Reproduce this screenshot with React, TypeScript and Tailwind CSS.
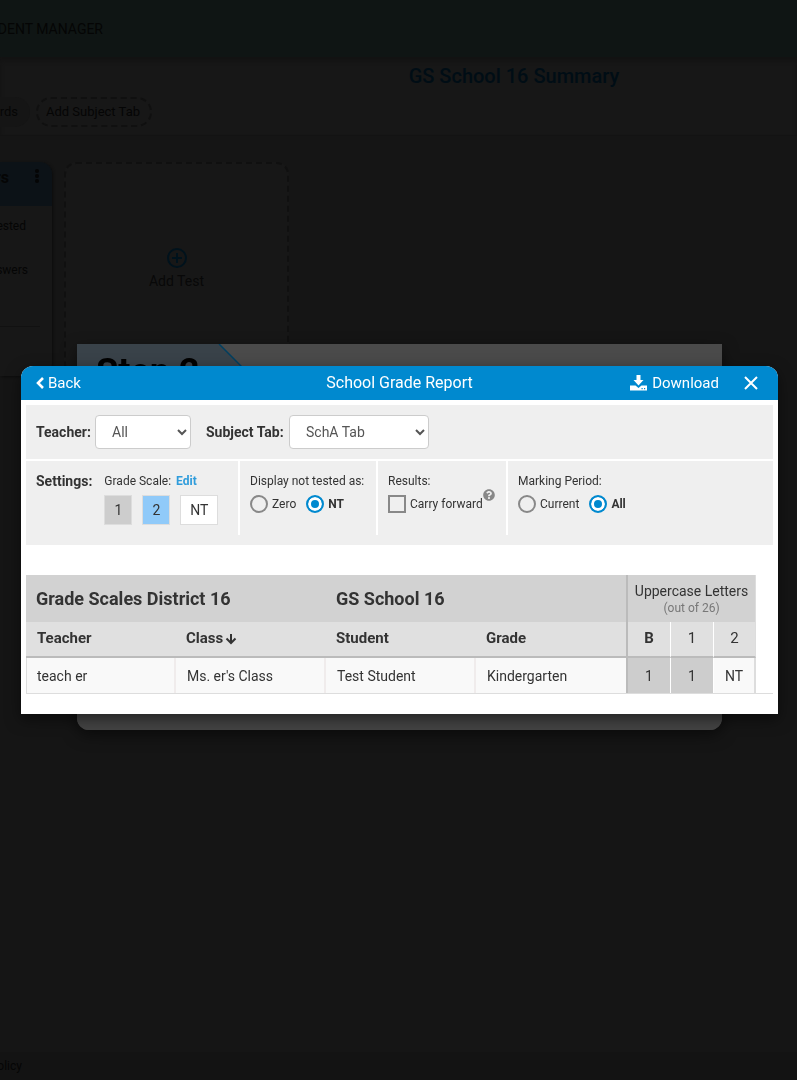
import React from "react";
import { FaQuestionCircle } from "react-icons/fa";

function Radio({ name, label, checked = false }: { name: string; label: string; checked?: boolean }) {
  return (
    <label className={checked ? "flex items-center gap-1 font-bold" : "flex items-center gap-1"}>
      <input
        type="radio"
        name={name}
        defaultChecked={checked}
        className="size-[18px] appearance-none rounded-full border-2 border-[#888] checked:border-[#0089cf] checked:bg-[#0089cf] checked:shadow-[inset_0_0_0_3px_#fff]"
      />
      {label}
    </label>
  );
}

function Backdrop() {
  return (
    <div className="flex min-h-screen flex-col overflow-hidden bg-[#151515] text-[#050505]">
      <header className="flex h-[57px] items-center bg-[#0f1514]">
        <div className="flex w-[103px] justify-end text-sm whitespace-nowrap">STUDENT MANAGER</div>
      </header>
      <section className="h-[79px] border-b border-[#131313] bg-[#171717] shadow-[inset_0_4px_4px_#131313]">
        <h1 className="pt-[5px] pl-[231px] text-center text-xl leading-7 font-medium text-[#000d15]">
          GS School 16 Summary
        </h1>
        <nav className="flex gap-1.5 pt-[7px] text-[13px] leading-[26px]">
          <div className="flex w-[30px] justify-end rounded-r-full bg-[#151515] py-0.5 pr-3 whitespace-nowrap">
            <button type="button">Words</button>
          </div>
          <button type="button" className="rounded-full border-2 border-dashed border-[#101010] pr-2.5 pl-2">
            Add Subject Tab
          </button>
        </nav>
      </section>
      <div className="flex grow items-start gap-3 pt-[26px]">
        <article className="h-[214px] w-[52px] overflow-hidden rounded-r-xl bg-[#171717] text-xs shadow-[1px_1px_3px_#0c0c0c]">
          <div className="flex h-[44px] justify-end gap-[26px] bg-[#0c1217] pr-[13px] whitespace-nowrap">
            <h2 className="pt-1 text-base font-bold">Letters</h2>
            <svg viewBox="0 0 4 14" className="mt-[7px] h-3.5 w-1 shrink-0 fill-[#050505]" aria-hidden="true">
              <circle cx="2" cy="2" r="2" />
              <circle cx="2" cy="7" r="2" />
              <circle cx="2" cy="12" r="2" />
            </svg>
          </div>
          <p className="flex justify-end pt-3 pr-[26px] leading-4 whitespace-nowrap">Not Tested</p>
          <p className="flex justify-end pt-7 pr-6 leading-4 whitespace-nowrap">Answers</p>
          <hr className="mt-12 mr-3 border-[#111]" />
        </article>
        <button
          type="button"
          className="flex h-[214px] w-[225px] flex-col items-center justify-center gap-[3px] rounded-xl border-2 border-dashed border-[#101010] bg-[#171717] text-sm text-[#080808]"
        >
          <svg viewBox="0 0 20 20" className="size-5 fill-none stroke-[#00121c] stroke-2" aria-hidden="true">
            <circle cx="10" cy="10" r="9" />
            <path d="M10 5v10M5 10h10" />
          </svg>
          Add Test
        </button>
      </div>
      <footer className="h-7 bg-[#131313] text-xs leading-7">
        <div className="flex w-[22px] justify-end whitespace-nowrap">Privacy Policy</div>
      </footer>
    </div>
  );
}

function StepDialog() {
  return (
    <div className="fixed inset-0 flex items-center pr-[75px] pb-1.5 pl-[77px]">
      <div className="w-full overflow-hidden rounded-b-xl bg-[#4a4a4a] shadow-[0_5px_15px_rgba(0,0,0,0.5)]">
        <div className="relative h-[60px]">
          <svg viewBox="0 0 200 60" className="absolute top-0 left-0 h-[60px] w-[200px]" aria-hidden="true">
            <path d="M0 0H142L200 58V60H0Z" fill="#394249" />
            <path d="M142 0L200 58" stroke="#003f60" strokeWidth="1.5" />
          </svg>
          <h2 className="relative pt-2 pl-[19px] text-4xl font-bold text-black">Step 2</h2>
        </div>
        <div className="h-[326px] bg-[#444]" />
      </div>
    </div>
  );
}

const chips = [
  { text: "1", style: "w-7 bg-[#cdcdcd]" },
  { text: "2", style: "w-7 bg-[#90caf9]" },
  { text: "NT", style: "w-[38px] bg-white" },
];

function ReportDialog() {
  return (
    <div className="fixed inset-0 flex items-center pr-[19px] pl-[21px]">
      <div
        role="dialog"
        aria-labelledby="report-title"
        className="w-full rounded-t-xl bg-white text-[#333] shadow-[0_5px_15px_rgba(0,0,0,0.5)]"
      >
        <div className="grid h-[34px] grid-cols-3 items-center rounded-t-xl bg-[#0089cf] px-[15px] text-white">
          <button type="button" className="flex items-center gap-1 text-[15px]">
            <svg viewBox="0 0 8 12" className="h-3 w-2 fill-none stroke-white stroke-[2.6]" aria-hidden="true">
              <path d="M7 1L2 6L7 11" />
            </svg>
            Back
          </button>
          <h2 id="report-title" className="text-center text-base whitespace-nowrap">School Grade Report</h2>
          <div className="flex items-center justify-end gap-[25px] pr-[5px]">
            <button type="button" className="flex items-center gap-[5px] text-[15px]">
              <svg viewBox="0 0 17 16" className="h-4 w-[17px] fill-white" aria-hidden="true">
                <path d="M6.5 0H10.500V5H13.500L8.500 10.500L3.500 5H6.500Z" />
                <path fillRule="evenodd" d="M0 10.500H5.500L8.500 13L11.500 10.500H17V15.500H0ZM11.500 13V14.200H12.700V13ZM14 13V14.200H15.200V13Z" />
              </svg>
              Download
            </button>
            <button type="button" aria-label="Close">
              <svg viewBox="0 0 14 14" className="size-3.5 fill-none stroke-white stroke-2" aria-hidden="true">
                <path d="M1 1L13 13M13 1L1 13" />
              </svg>
            </button>
          </div>
        </div>
        <div className="px-[5px] pt-[5px] pb-5">
          <div className="flex items-center bg-[#efefef] px-2.5 py-2.5 text-sm">
            <label htmlFor="teacher" className="w-[59px] font-bold">Teacher:</label>
            <select id="teacher" className="mr-[15px] h-[34px] w-24 rounded border border-[#ccc] bg-white px-3 text-[#555]">
              <option>All</option>
            </select>
            <label htmlFor="subject" className="w-[83px] font-bold">Subject Tab:</label>
            <select id="subject" className="h-[34px] w-[140px] rounded border border-[#ccc] bg-white px-3 text-[#555]">
              <option>SchA Tab</option>
            </select>
          </div>
          <div className="mt-0.5 flex h-[84px] bg-[#efefef] pb-2.5 text-xs leading-5">
            <div className="flex w-[214px] gap-3 border-r-2 border-white pt-2.5 pl-2.5">
              <h3 className="text-sm leading-5 font-bold">Settings:</h3>
              <div>
                <div className="flex gap-[5px]">
                  Grade Scale:
                  <a href="#edit" className="font-bold text-[#2f9cdb]">Edit</a>
                </div>
                <div className="mt-1 flex gap-2.5 text-sm">
                  {chips.map((c) => (
                    <span key={c.text} className={`${c.style} flex h-[30px] items-center justify-center border border-[#ddd]`}>
                      {c.text}
                    </span>
                  ))}
                </div>
              </div>
            </div>
            <div role="radiogroup" aria-labelledby="untested-label" className="w-[138px] border-r-2 border-white pt-2.5 pl-2.5 whitespace-nowrap">
              <div id="untested-label">Display not tested as:</div>
              <div className="flex gap-2.5 pt-[3px]">
                <Radio name="untested" label="Zero" />
                <Radio name="untested" label="NT" checked />
              </div>
            </div>
            <div className="w-[130px] border-r-2 border-white pt-2.5 pl-2.5 whitespace-nowrap">
              <div>Results:</div>
              <div className="flex items-start pt-[3px]">
                <label className="flex items-center gap-1">
                  <input type="checkbox" className="size-[18px] appearance-none border-2 border-[#888] checked:bg-[#0089cf]" />
                  Carry forward
                </label>
                <FaQuestionCircle className="-mt-[5px] size-3 shrink-0 text-[#888]" />
              </div>
            </div>
            <div role="radiogroup" aria-labelledby="period-label" className="pt-2.5 pl-2.5 whitespace-nowrap">
              <div id="period-label">Marking Period:</div>
              <div className="flex gap-2.5 pt-[3px]">
                <Radio name="period" label="Current" />
                <Radio name="period" label="All" checked />
              </div>
            </div>
          </div>
          <div className="mt-[30px] border-b border-[#ddd]">
            <table className="w-[730px] table-fixed border-separate border-spacing-0 text-sm">
              <colgroup>
                <col className="w-[150px]" />
                <col className="w-[150px]" />
                <col className="w-[150px]" />
                <col className="w-[150px]" />
                <col className="w-[45px]" />
                <col className="w-[43px]" />
                <col className="w-[42px]" />
              </colgroup>
              <thead>
                <tr className="h-[47px] bg-[#d2d2d2] text-left text-lg">
                  <th colSpan={2} className="pl-2.5 font-bold">Grade Scales District 16</th>
                  <th colSpan={2} className="pl-2.5 font-bold">GS School 16</th>
                  <th colSpan={3} className="border-r border-l-2 border-r-[#ddd] border-l-[#bbb] text-center text-sm leading-[18px] font-normal whitespace-nowrap">
                    Uppercase Letters
                    <div className="text-xs leading-4 text-[#777]">(out of 26)</div>
                  </th>
                </tr>
                <tr className="h-9 bg-[#e0e0e0] text-left text-[15px] *:border-b-2 *:border-b-[#bbb]">
                  <th className="pl-[11px] font-bold">Teacher</th>
                  <th className="pl-2.5 font-bold">
                    <button type="button" className="flex items-center gap-0.5">
                      Class
                      <svg viewBox="0 0 12 12" className="size-3 fill-none stroke-[#333] stroke-2" aria-hidden="true">
                        <path d="M6 1V10M1.500 5.500L6 10L10.500 5.500" />
                      </svg>
                    </button>
                  </th>
                  <th className="pl-2.5 font-bold">Student</th>
                  <th className="pl-2.5 font-bold">Grade</th>
                  <th className="border-r border-l-2 border-r-white border-l-[#bbb] text-center font-bold">B</th>
                  <th className="border-r border-r-white text-center font-normal">1</th>
                  <th className="border-r border-r-[#ddd] text-center font-normal">2</th>
                </tr>
              </thead>
              <tbody>
                <tr className="h-[35px] bg-[#f9f9f9]">
                  <td className="border-r-2 border-l border-r-[#f0ecec] border-l-[#ddd] pl-2.5">teach er</td>
                  <td className="border-r-2 border-r-[#f0ecec] pl-[11px]">Ms. er's Class</td>
                  <td className="border-r-2 border-r-[#f0ecec] pl-[11px]">Test Student</td>
                  <td className="pl-[11px]">Kindergarten</td>
                  <td className="border-r border-l-2 border-r-white border-l-[#bbb] bg-[#cdcdcd] text-center">1</td>
                  <td className="border-r border-r-white bg-[#cdcdcd] text-center">1</td>
                  <td className="border-r-2 border-r-[#ddd] text-center">NT</td>
                </tr>
              </tbody>
            </table>
          </div>
        </div>
      </div>
    </div>
  );
}

export default function App() {
  return (
    <div className="font-[Roboto,sans-serif]">
      <Backdrop />
      <StepDialog />
      <ReportDialog />
    </div>
  );
}
